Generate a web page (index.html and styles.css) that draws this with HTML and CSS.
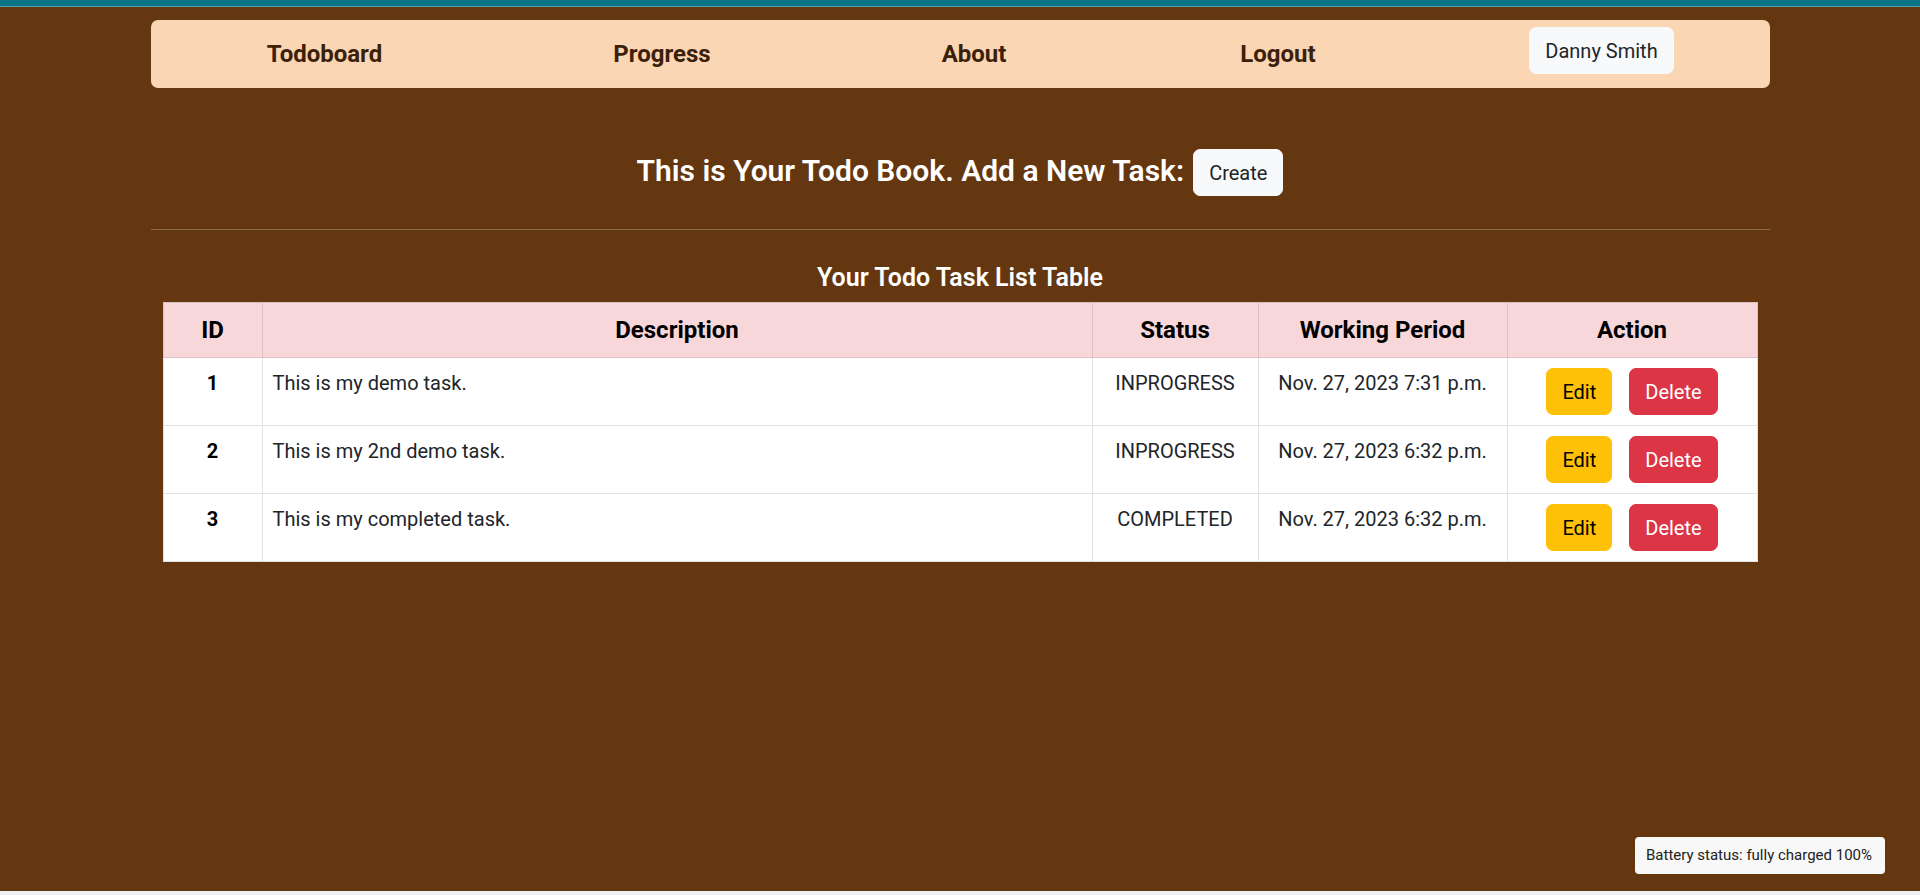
FILE: index.html
```html
<!DOCTYPE html>
<html lang="en">
<head>
<meta charset="utf-8">
<title>Todoboard</title>
<link rel="stylesheet" href="styles.css">
</head>
<body>
<div class="topbar"></div>
<div class="page">
  <nav class="navbar">
    <a class="nav-link" href="#">Todoboard</a>
    <a class="nav-link" href="#">Progress</a>
    <a class="nav-link" href="#">About</a>
    <a class="nav-link" href="#">Logout</a>
    <button class="btn btn-light nav-user">Danny Smith</button>
  </nav>

  <section class="intro">
    <h3 class="intro-title">This is Your Todo Book. Add a New Task:</h3>
    <button class="btn btn-light">Create</button>
  </section>

  <hr class="divider">

  <h5 class="table-title">Your Todo Task List Table</h5>

  <table class="task-table">
    <colgroup>
      <col class="col-id">
      <col class="col-desc">
      <col class="col-status">
      <col class="col-period">
      <col class="col-action">
    </colgroup>
    <thead>
      <tr>
        <th>ID</th>
        <th>Description</th>
        <th>Status</th>
        <th>Working Period</th>
        <th>Action</th>
      </tr>
    </thead>
    <tbody>
      <tr>
        <td class="cell-id">1</td>
        <td class="cell-desc">This is my demo task.</td>
        <td class="cell-center">INPROGRESS</td>
        <td class="cell-center">Nov. 27, 2023 7:31 p.m.</td>
        <td class="cell-actions"><button class="btn btn-warning">Edit</button><button class="btn btn-danger">Delete</button></td>
      </tr>
      <tr>
        <td class="cell-id">2</td>
        <td class="cell-desc">This is my 2nd demo task.</td>
        <td class="cell-center">INPROGRESS</td>
        <td class="cell-center">Nov. 27, 2023 6:32 p.m.</td>
        <td class="cell-actions"><button class="btn btn-warning">Edit</button><button class="btn btn-danger">Delete</button></td>
      </tr>
      <tr>
        <td class="cell-id">3</td>
        <td class="cell-desc">This is my completed task.</td>
        <td class="cell-center">COMPLETED</td>
        <td class="cell-center">Nov. 27, 2023 6:32 p.m.</td>
        <td class="cell-actions"><button class="btn btn-warning">Edit</button><button class="btn btn-danger">Delete</button></td>
      </tr>
    </tbody>
  </table>
</div>
<div class="battery">Battery status: fully charged 100%</div>
</body>
</html>
```

FILE: styles.css
```css
html {
  background: #eef0f2;
}
body {
  margin: 0;
  min-height: 891px;
  background: #643710;
  font-family: Roboto, "Liberation Sans", sans-serif;
  font-size: 20px;
  line-height: 1.5;
  color: #212529;
}
.topbar {
  height: 6px;
  background: #0e7487;
  border-bottom: 1px solid #4fa2b0;
}
.page {
  width: 1619px;
  margin: 0 auto;
  padding-top: 13px;
}
.navbar {
  display: grid;
  grid-template-columns: 348px 327px 297px 311px 1fr;
  justify-items: center;
  align-items: center;
  height: 68px;
  background: #fad6b4;
  border-radius: 7px;
}
.nav-link {
  color: #3b2109;
  font-size: 24px;
  font-weight: 700;
  text-decoration: none;
}
.nav-user {
  align-self: start;
  margin-top: 7px;
  padding-top: 7px;
  padding-bottom: 6px;
}
.btn {
  font-family: inherit;
  font-size: 20px;
  line-height: 31px;
  padding: 8px 15px 6px;
  border: 1px solid transparent;
  border-radius: 7px;
  cursor: pointer;
}
.btn-light {
  background: #f8f9fa;
  border-color: #f8f9fa;
  color: #212529;
}
.btn-warning {
  background: #ffc107;
  border-color: #ffc107;
  color: #000;
}
.btn-danger {
  background: #dc3545;
  border-color: #dc3545;
  color: #fff;
}
.intro {
  display: flex;
  justify-content: center;
  align-items: center;
  gap: 9px;
  margin-top: 61px;
  height: 47px;
}
.intro-title {
  margin: 0;
  color: #fff;
  font-size: 30px;
  font-weight: 600;
  line-height: 1.2;
  position: relative;
  top: -2px;
}
.divider {
  margin: 33px 0 0;
  border: 0;
  border-top: 1px solid #8a6c50;
}
.table-title {
  margin: 33px 0 9px;
  color: #fff;
  text-align: center;
  font-size: 25px;
  font-weight: 600;
  line-height: 30px;
}
.task-table {
  width: 1595px;
  margin: 0 12px;
  border-collapse: collapse;
  table-layout: fixed;
  background: #fff;
}
.col-id { width: 99px; }
.col-desc { width: 830px; }
.col-status { width: 166px; }
.col-period { width: 249px; }
.col-action { width: 250px; }
.task-table th {
  background: #f8d7da;
  border: 1px solid #dcc0c3;
  color: #000;
  font-size: 24px;
  font-weight: 700;
  text-align: center;
  padding: 12px 10px;
  line-height: 30px;
}
.task-table td {
  border: 1px solid #dee2e6;
  padding: 10px;
  vertical-align: top;
  line-height: 30px;
}
.cell-id {
  text-align: center;
  font-weight: 700;
  color: #000;
}
.cell-center {
  text-align: center;
}
.cell-actions {
  text-align: center;
}
.cell-actions .btn + .btn {
  margin-left: 17px;
}
.battery {
  position: fixed;
  right: 35px;
  bottom: 21px;
  width: 250px;
  height: 37px;
  box-sizing: border-box;
  padding: 0 11px;
  background: #f8f8f8;
  border-radius: 4px;
  font-size: 15px;
  line-height: 37px;
  color: #222;
}
```
